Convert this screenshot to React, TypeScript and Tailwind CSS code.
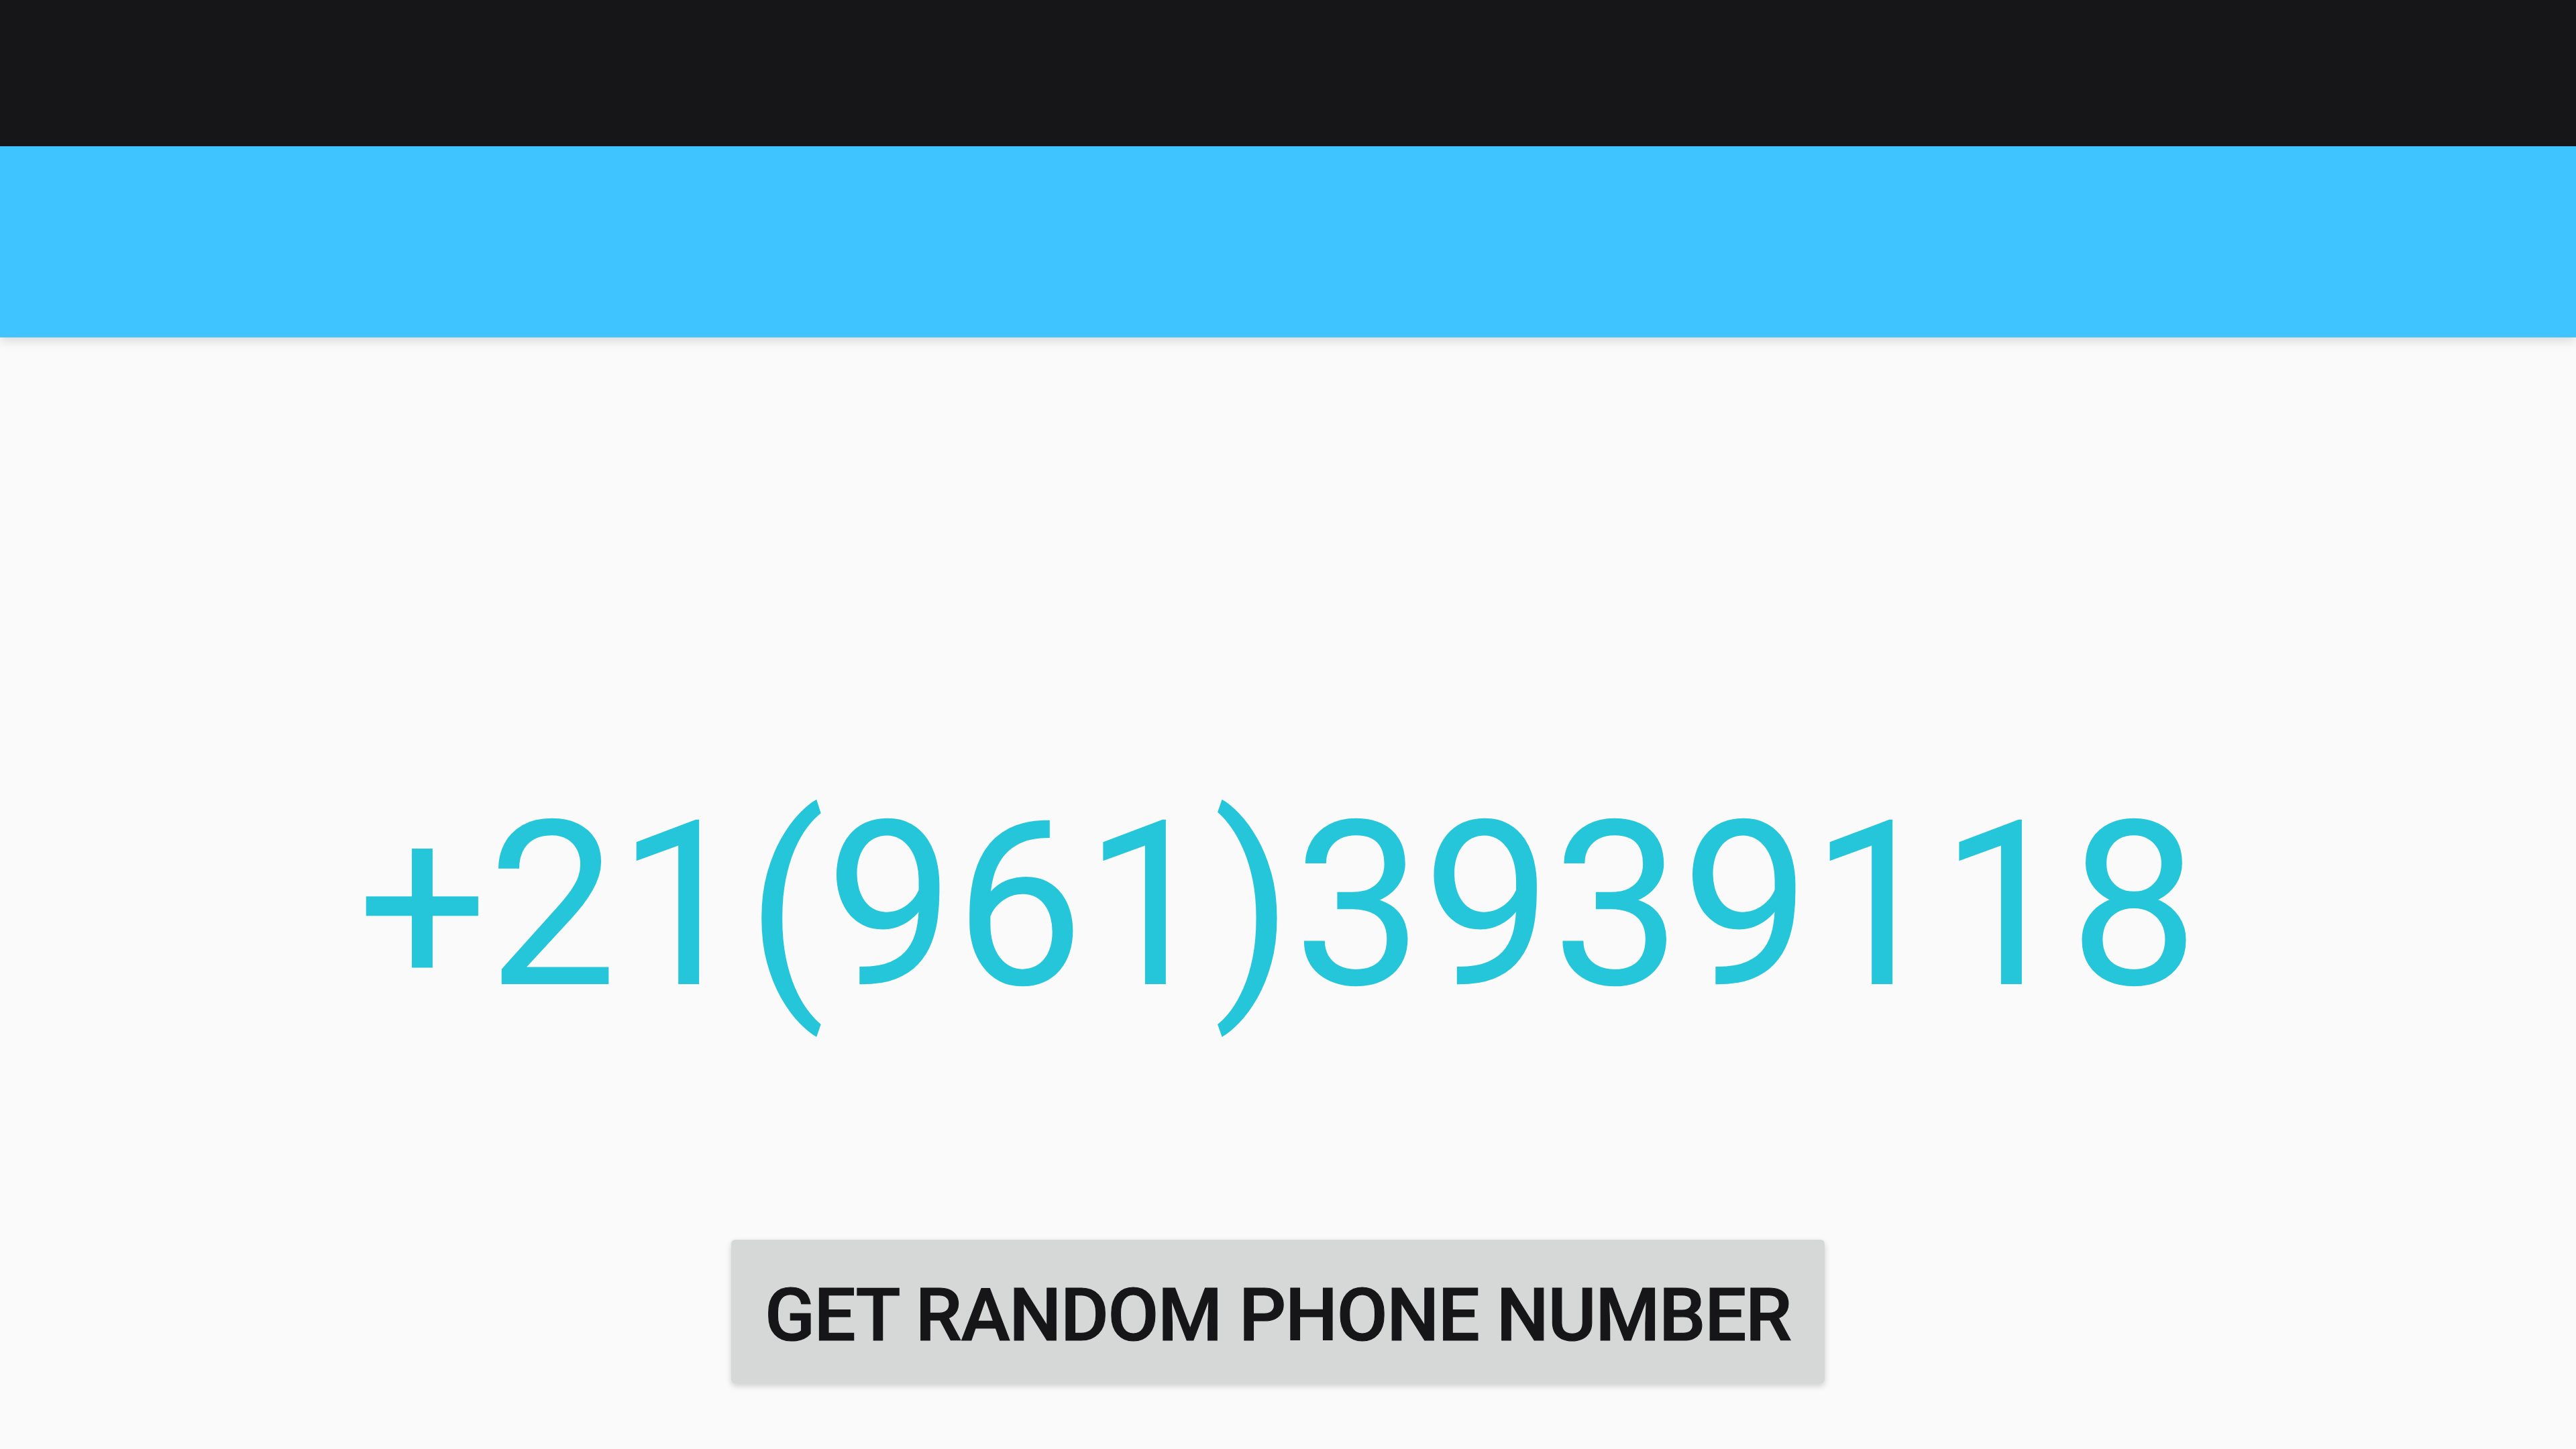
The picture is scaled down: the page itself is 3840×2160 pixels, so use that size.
import { useState } from 'react';

const randomPhone = () => '+21(961)3939118';

const App = () => {
    const [phone, setPhone] = useState(randomPhone());

    const nextPhone = () => {
        const d = () => Math.floor(Math.random() * 10);
        setPhone(`+${d()}${d()}(${d()}${d()}${d()})${d()}${d()}${d()}${d()}${d()}${d()}${d()}`);
    };

    return (
        <div className="w-[3840px] h-[2160px] flex flex-col bg-[#fafafa] overflow-hidden font-['Roboto','Liberation_Sans',sans-serif]">
            {/* Status bar */}
            <div className="h-[218px] shrink-0 bg-[#161517]"></div>

            {/* App bar */}
            <div className="h-[285px] shrink-0 bg-[#40c4ff] shadow-[0_6px_14px_rgba(0,0,0,0.12)] relative z-10"></div>

            {/* Content */}
            <div className="flex-1 flex flex-col items-center pr-[30px]">
                <div className="mt-[676px] text-[343px] leading-none text-[#26c6da] whitespace-nowrap">
                    {phone}
                </div>
                <button
                    onClick={nextPhone}
                    className="mt-[326px] h-[214px] pt-[10px] px-[50px] bg-[#d6d7d7] rounded-[6px] shadow-[0_4px_10px_rgba(0,0,0,0.18)] flex items-center justify-center text-[110px] font-medium tracking-[-1.3px] [-webkit-text-stroke:1.2px_#161618] text-[#161618] uppercase whitespace-nowrap"
                >
                    Get random phone number
                </button>
            </div>
        </div>
    );
};

export default App;
